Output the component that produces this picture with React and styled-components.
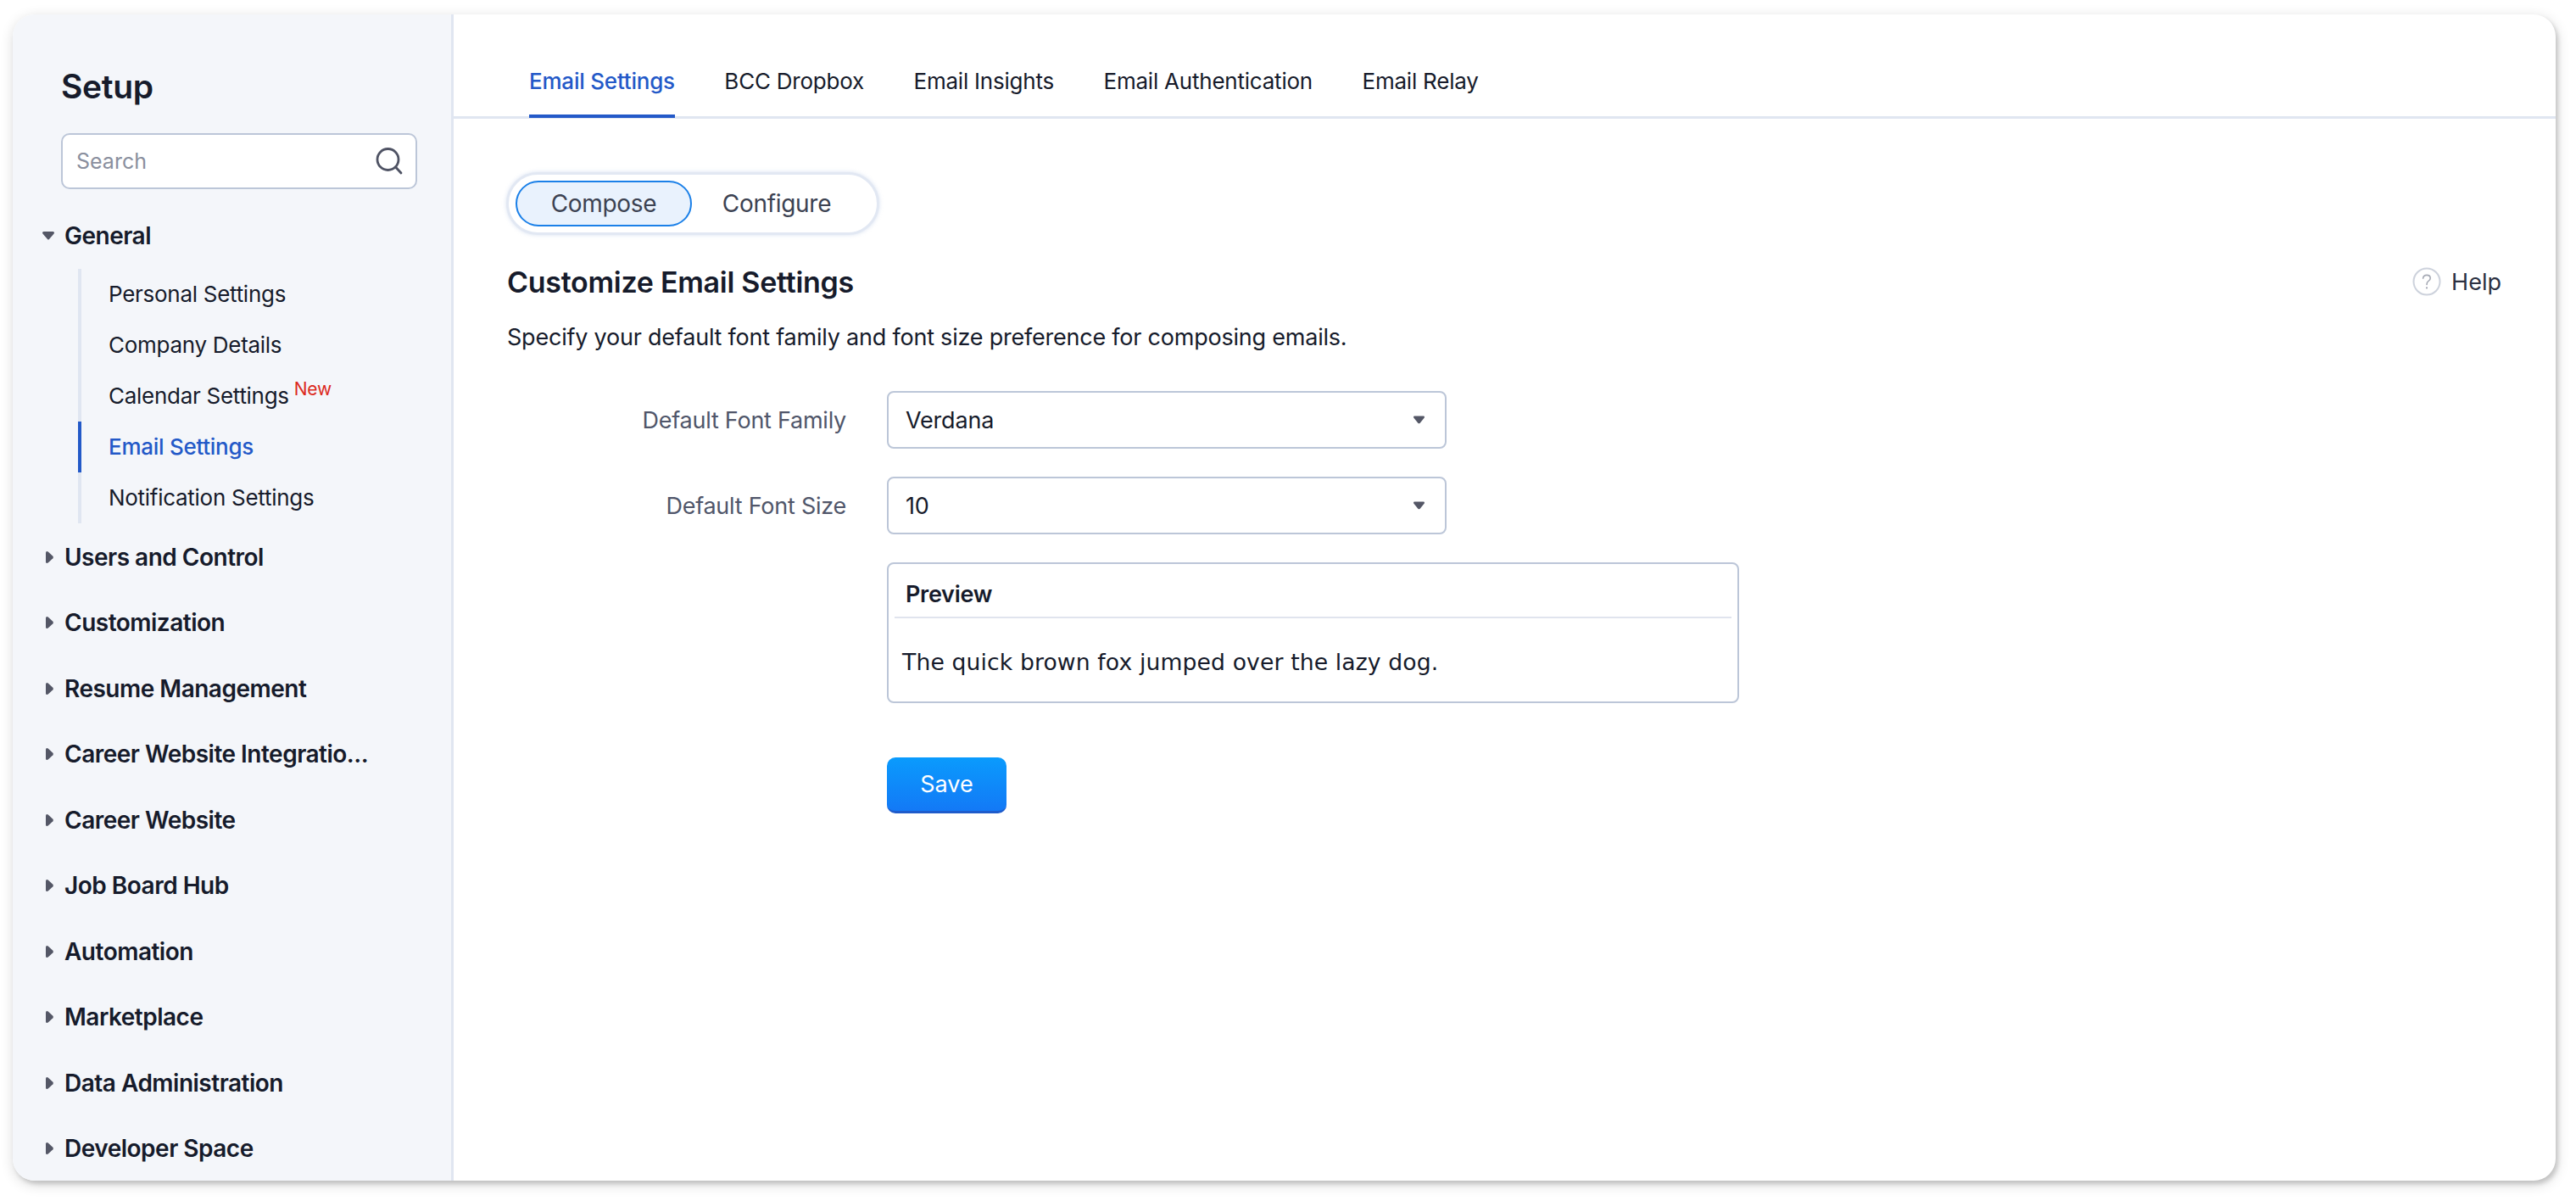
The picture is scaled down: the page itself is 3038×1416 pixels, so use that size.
import React from "react";
import styled, { createGlobalStyle } from "styled-components";

const GlobalStyle = createGlobalStyle`
  html, body { margin: 0; padding: 0; background: #fff; }
  body { font-family: Inter, "Noto Sans", sans-serif; color: #161b2b; }
`;

const Page = styled.div`
  min-height: 100vh;
  box-sizing: border-box;
  padding: 17px 0 0 15px;
`;

const Card = styled.div`
  width: 2999px;
  height: 1375px;
  display: flex;
  border-radius: 26px;
  overflow: hidden;
  background: #fff;
  box-shadow: 3px 4px 5px rgba(0, 0, 0, 0.15), 1px 4px 16px rgba(0, 0, 0, 0.16);
`;

const Sidebar = styled.aside`
  width: 520px;
  flex: none;
  box-sizing: border-box;
  background: #f4f6fa;
  border-right: 3px solid #e0e6f1;
  padding: 62px 0 0;
`;

const SetupTitle = styled.h1`
  margin: 0 0 0 57px;
  font-size: 39px;
  line-height: 46px;
  font-weight: 600;
  letter-spacing: -0.3px;
`;

const SearchBox = styled.div`
  margin: 32px 0 0 57px;
  width: 420px;
  height: 66px;
  box-sizing: border-box;
  display: flex;
  align-items: center;
  justify-content: space-between;
  padding: 0 14px 0 16px;
  background: #fff;
  border: 2px solid #bcc6d8;
  border-radius: 10px;
  font-size: 25px;
  color: #8a8f9e;
`;

const GroupRow = styled.div`
  height: 77.5px;
  box-sizing: border-box;
  display: flex;
  align-items: center;
  padding: 0 0 2px 35px;
  font-size: 28px;
  font-weight: 600;
  letter-spacing: -0.5px;
  white-space: nowrap;
`;

const FirstGroup = styled(GroupRow)`
  height: 60px;
  margin-top: 25px;
  padding-bottom: 0;
`;

const RightArrow = styled.svg`
  width: 14px;
  height: 14px;
  flex: none;
  margin-right: 12px;
  fill: #545766;
`;

const DownArrow = styled(RightArrow)`
  margin-right: 12px;
`;

const SelectCaret = styled.svg`
  width: 13px;
  height: 10px;
  flex: none;
  fill: #545766;
`;

const SubList = styled.div`
  margin: 9px 0 2px 77px;
  border-left: 4px solid #e0e6f1;
`;

const SubItem = styled.div`
  height: 60px;
  box-sizing: border-box;
  display: flex;
  align-items: center;
  padding: 0 0 2px 32px;
  font-size: 26px;
  letter-spacing: -0.28px;
  white-space: nowrap;
  margin-left: -4px;
  border-left: 4px solid ${(p) => (p.$active ? "#2359c8" : "transparent")};
  color: ${(p) => (p.$active ? "#2359c8" : "#161b2b")};
  font-weight: ${(p) => (p.$active ? 500 : 400)};
`;

const NewTag = styled.sup`
  font-size: 21px;
  line-height: 1;
  color: #dc2a1c;
  margin: -16px 0 0 6px;
  align-self: center;
`;

const Main = styled.main`
  flex: 1;
  min-width: 0;
`;

const TabBar = styled.nav`
  height: 123px;
  box-sizing: border-box;
  display: flex;
  gap: 58.5px;
  padding-left: 89px;
  border-bottom: 3px solid #e0e6f1;
`;

const Tab = styled.div`
  height: 122px;
  box-sizing: border-box;
  padding-top: 63px;
  font-size: 26px;
  line-height: 32px;
  letter-spacing: -0.22px;
  white-space: nowrap;
  border-bottom: 4px solid ${(p) => (p.$active ? "#2359c8" : "transparent")};
  color: ${(p) => (p.$active ? "#2359c8" : "#161b2b")};
  font-weight: ${(p) => (p.$active ? 500 : 400)};
`;

const Content = styled.div`
  padding: 63px 64px 0 63px;
`;

const Segmented = styled.div`
  display: flex;
  width: 440px;
  height: 74px;
  box-sizing: border-box;
  margin-left: -1px;
  align-items: center;
  padding: 0 8px;
  background: #fff;
  border: 3px solid #e2e8f3;
  border-radius: 37px;
  box-shadow: 0 0 5px rgba(200, 212, 235, 0.7);
`;

const Segment = styled.div`
  width: ${(p) => (p.$active ? "208px" : "200px")};
  height: 54px;
  box-sizing: border-box;
  display: flex;
  align-items: center;
  justify-content: center;
  font-size: 28px;
  letter-spacing: -0.3px;
  color: #3c4252;
  border-radius: 27px;
  background: ${(p) => (p.$active ? "#e9f2fd" : "transparent")};
  border: 2px solid ${(p) => (p.$active ? "#1b80e8" : "transparent")};
`;

const HeadingRow = styled.div`
  display: flex;
  justify-content: space-between;
  align-items: center;
  margin-top: 30px;
  height: 50px;
`;

const Heading = styled.h2`
  margin: 0;
  font-size: 34px;
  font-weight: 600;
  letter-spacing: -0.28px;
`;

const Help = styled.div`
  display: flex;
  align-items: center;
  gap: 12px;
  font-size: 27px;
  color: #2c3142;
`;

const Description = styled.p`
  margin: 23px 0 0;
  font-size: 27px;
  line-height: 36px;
  letter-spacing: -0.22px;
`;

const FormRow = styled.div`
  display: flex;
  align-items: center;
  margin-top: ${(p) => p.$top};
`;

const FieldLabel = styled.div`
  width: 400px;
  flex: none;
  text-align: right;
  font-size: 27px;
  letter-spacing: -0.25px;
  color: #50566a;
`;

const SelectBox = styled.div`
  width: 660px;
  height: 68px;
  box-sizing: border-box;
  margin-left: 48px;
  display: flex;
  align-items: center;
  justify-content: space-between;
  padding: 0 24px 0 20px;
  background: #fff;
  border: 2px solid #bcc6d8;
  border-radius: 8px;
  font-size: 27px;
  letter-spacing: -0.2px;
`;

const Preview = styled.div`
  width: 1005px;
  height: 166px;
  margin: 33px 0 0 448px;
  box-sizing: border-box;
  padding: 0 7px;
  background: #fff;
  border: 2px solid #bcc6d8;
  border-radius: 8px;
`;

const PreviewTitle = styled.div`
  height: 64px;
  box-sizing: border-box;
  padding: 20px 0 0 13px;
  font-size: 27px;
  line-height: 32px;
  font-weight: 600;
  letter-spacing: -0.3px;
  border-bottom: 2px solid #e0e4ee;
`;

const PreviewText = styled.div`
  margin-top: 36px;
  padding-left: 9px;
  font-family: "DejaVu Sans", Verdana, sans-serif;
  font-size: 26.67px;
  line-height: 32px;
  letter-spacing: 0.11px;
  white-space: nowrap;
`;

const SaveButton = styled.button`
  display: block;
  margin: 64px 0 0 448px;
  width: 141px;
  height: 66px;
  padding: 0;
  border: 0;
  border-bottom: 3px solid #1f5ccb;
  border-radius: 10px;
  background: linear-gradient(180deg, #0a9bfd 0%, #1379f6 100%);
  color: #fff;
  font-family: inherit;
  font-size: 27px;
  font-weight: 400;
`;

const Caret = () => (
  <SelectCaret viewBox="0 0 16 12">
    <path d="M0 2 Q0 .5 1.5 .5 H14.5 Q16 .5 16 2 Q16 2.8 15 3.8 L9.5 10.6 Q8 12 6.5 10.6 L1 3.8 Q0 2.8 0 2Z" />
  </SelectCaret>
);

const ArrowDown = () => (
  <DownArrow viewBox="0 0 14 14">
    <path d="M0 3.5 Q0 2 1.5 2 H12.5 Q14 2 14 3.5 Q14 4.2 13 5.2 L8 11 Q7 12 6 11 L1 5.2 Q0 4.2 0 3.5Z" />
  </DownArrow>
);

const ArrowRight = () => (
  <RightArrow viewBox="0 0 14 14">
    <path d="M4 1.5 Q4 0 5.5 0 Q6 0 7 .8 L12.4 5.8 Q13.5 7 12.4 8.2 L7 13.2 Q6 14 5.5 14 Q4 14 4 12.5Z" />
  </RightArrow>
);

const SearchIcon = () => (
  <svg width="34" height="34" viewBox="0 0 34 34" fill="none" stroke="#4f5364" strokeWidth="2.8" strokeLinecap="round">
    <circle cx="15.5" cy="15" r="12.5" />
    <path d="M25 24.5 L31 31" />
  </svg>
);

const HelpIcon = () => (
  <svg width="34" height="34" viewBox="0 0 34 34" fill="none">
    <circle cx="17" cy="17" r="15.5" stroke="#cdd2dc" strokeWidth="2" />
    <path d="M12.6 13.2 Q13 9.4 17 9.4 Q21.2 9.4 21.2 13 Q21.2 15.2 19 16.4 Q17 17.6 17 20.4" stroke="#a5a9b4" strokeWidth="1.6" strokeLinecap="round" />
    <circle cx="17" cy="24.4" r="1.1" fill="#a5a9b4" />
  </svg>
);

const subItems = ["Personal Settings", "Company Details", "Calendar Settings", "Email Settings", "Notification Settings"];

const groups = [
  "Users and Control",
  "Customization",
  "Resume Management",
  "Career Website Integratio...",
  "Career Website",
  "Job Board Hub",
  "Automation",
  "Marketplace",
  "Data Administration",
  "Developer Space",
];

const tabs = ["Email Settings", "BCC Dropbox", "Email Insights", "Email Authentication", "Email Relay"];

export default function App() {
  return (
    <Page>
      <GlobalStyle />
      <Card>
        <Sidebar>
          <SetupTitle>Setup</SetupTitle>
          <SearchBox>
            Search
            <SearchIcon />
          </SearchBox>
          <FirstGroup>
            <ArrowDown />
            General
          </FirstGroup>
          <SubList>
            {subItems.map((item) => (
              <SubItem key={item} $active={item === "Email Settings"}>
                {item}
                {item === "Calendar Settings" && <NewTag>New</NewTag>}
              </SubItem>
            ))}
          </SubList>
          {groups.map((group) => (
            <GroupRow key={group}>
              <ArrowRight />
              {group}
            </GroupRow>
          ))}
        </Sidebar>
        <Main>
          <TabBar>
            {tabs.map((tab) => (
              <Tab key={tab} $active={tab === "Email Settings"}>
                {tab}
              </Tab>
            ))}
          </TabBar>
          <Content>
            <Segmented>
              <Segment $active>Compose</Segment>
              <Segment>Configure</Segment>
            </Segmented>
            <HeadingRow>
              <Heading>Customize Email Settings</Heading>
              <Help>
                <HelpIcon />
                Help
              </Help>
            </HeadingRow>
            <Description>Specify your default font family and font size preference for composing emails.</Description>
            <FormRow $top="45px">
              <FieldLabel>Default Font Family</FieldLabel>
              <SelectBox>
                Verdana
                <Caret />
              </SelectBox>
            </FormRow>
            <FormRow $top="33px">
              <FieldLabel>Default Font Size</FieldLabel>
              <SelectBox>
                10
                <Caret />
              </SelectBox>
            </FormRow>
            <Preview>
              <PreviewTitle>Preview</PreviewTitle>
              <PreviewText>The quick brown fox jumped over the lazy dog.</PreviewText>
            </Preview>
            <SaveButton>Save</SaveButton>
          </Content>
        </Main>
      </Card>
    </Page>
  );
}
